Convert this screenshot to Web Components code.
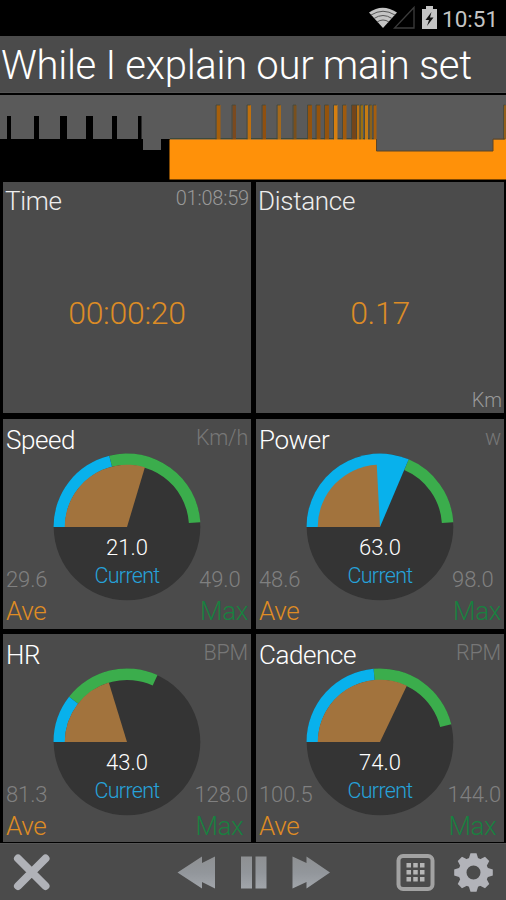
<!DOCTYPE html>
<html lang="en">
<head>
<meta charset="utf-8">
<title>Workout</title>
<style>
  body {
    margin: 0;
    background: #000;
    font-family: Roboto, "Liberation Sans", sans-serif;
    font-weight: 300;
  }
</style>
</head>
<body>
<workout-app></workout-app>
<script>
const define = (name, html, setup) => {
  const template = document.createElement('template');
  template.innerHTML = html;
  customElements.define(name, class extends HTMLElement {
    constructor() {
      super();
      this.attachShadow({ mode: 'open' }).appendChild(template.content.cloneNode(true));
    }
    connectedCallback() {
      if (setup) setup(this, this.shadowRoot);
    }
  });
};

define('status-bar', /*html*/`
  <style>
    :host {
      display: flex;
      justify-content: flex-end;
      height: 36px;
      background: #000;
      color: #c4c4c4;
      font-size: 22.5px;
      font-weight: 400;
      line-height: 38px;
    }
    svg { display: block; width: 75px; height: 36px; }
    span { width: 64px; white-space: nowrap; }
  </style>
  <svg viewBox="364 0 75 36">
    <path d="M366 12.500Q379.500 3 394 12.500L380 28z" fill="#c4c4c4"/>
    <path d="M368 15Q380 7.500 392 15M371 18.500Q380 12.500 389 18.500M374 22Q380 18 386 22" fill="none" stroke="#555" stroke-width="1"/>
    <path d="M411 7.500V28H391.500z" fill="none" stroke="#3c3c3c" stroke-width="1.300"/>
    <path d="M423 6h7v3h4v20h-15V9h4z" fill="#c4c4c4"/>
    <path d="M428.500 12l-6 8h3.500l-2 6 6.500-8.500h-3.500z" fill="#111"/>
  </svg>
  <span><slot></slot></span>
`);

define('interval-title', /*html*/`
  <style>
    :host {
      display: block;
      height: 57px;
      padding-left: 1px;
      box-sizing: border-box;
      background: #4b4b4b;
      border-bottom: 1px solid #555;
      color: #fff;
      font-size: 40px;
      letter-spacing: -.3px;
      line-height: 60px;
      white-space: nowrap;
    }
  </style>
  <slot></slot>
`);

// Power over time: black is done, orange is still to come
define('workout-profile', /*html*/`
  <style>
    :host { display: block; height: 87px; margin-top: 2px; }
    svg { display: block; }
  </style>
  <svg width="506" height="87" viewBox="0 95 506 87">
    <path d="M0 95h506v87H0z" fill="#5a5a5a"/>
    <path d="M0 139h143v11h18v-11h9v43H0z"/>
    <path d="M7 116h4v24H7zM34 116h5v24h-5zM60 116h7v24h-7zM86 116h7v24h-7zM112 116h5v24h-5zM138 116h3.500v24H138z"/>
    <path d="M170 138.500h206" stroke="#3d4a3c"/>
    <g id="peaks"></g>
    <path d="M169.500 139.500H376v11.500h117v-11.500h13V180H169.500z" fill="#ff9109"/>
    <path d="M376.500 139v12H493v-12h12V105" fill="none" stroke="#5d4526"/>
    <path d="M0 179.500h506V182H0z"/>
  </svg>
`, (el, root) => {
  const peaks = [
    [216.5, 4, '#a65f0b'], [232.500, 3.500, '#7a4a20'], [247.500, 3.500, '#c0700d'], [262.500, 3.500, '#8f5010'],
    [277.500, 3.500, '#a4691b'], [293.500, 3, '#79501d'], [308, 4, '#94530c'], [316.500, 4, '#94530c'],
    [325, 4, '#94530c'], [334, 3.500, '#d67f10'], [343, 3.500, '#a05a0d'], [352, 5, '#74451a'],
    [357, 2.500, '#bd7413'], [360.500, 2.500, '#9a7010'], [365, 3, '#c57b13'], [369.500, 2.500, '#8b6119'],
    [373.500, 3, '#a65e0e'], [504, 2, '#c57b13']
  ];
  root.getElementById('peaks').innerHTML = peaks.map(([x, w, fill]) =>
    `<path d="M${x} 105h${w}v35h-${w}z" fill="${fill}"/><path d="M${x - .5} 140V105h${w}" fill="none" stroke="#454838" stroke-width=".8"/>`
  ).join('');
});

define('value-tile', /*html*/`
  <style>
    :host {
      display: grid;
      grid-template-rows: 36px 1fr 30px;
      box-sizing: border-box;
      margin-bottom: 1px;
      padding: 1px 2px 0 2px;
      background: #4b4b4b;
      color: #999;
      font-size: 20px;
    }
    header { display: flex; justify-content: space-between; color: #999; }
    h2 {
      margin: 0;
      color: #eee;
      font-size: 26px;
      font-weight: 300;
      letter-spacing: -.3px;
      line-height: 37px;
    }
    header slot { display: block; letter-spacing: -.2px; line-height: 30px; }
    .value {
      align-self: center;
      padding-top: 24px;
      text-align: center;
      color: #dc8c26;
      font-size: 32px;
      letter-spacing: -.3px;
      line-height: 40px;
    }
    footer { text-align: right; line-height: 34px; }
  </style>
  <header><h2></h2><slot name="total"></slot></header>
  <div class="value"><slot></slot></div>
  <footer><slot name="unit"></slot></footer>
`, (el, root) => {
  root.querySelector('h2').textContent = el.getAttribute('label');
});

define('gauge-tile', /*html*/`
  <style>
    :host {
      display: grid;
      grid-template: 1fr / 1fr;
      background: #4b4b4b;
      overflow: hidden;
    }
    svg { grid-area: 1 / 1; display: block; width: 248px; height: 210px; }
    .labels {
      grid-area: 1 / 1;
      display: flex;
      flex-direction: column;
      justify-content: space-between;
      z-index: 1;
      height: 209px;
      padding: 0 3px 0 3px;
      box-sizing: border-box;
    }
    .row { display: flex; justify-content: space-between; }
    h2 {
      margin: 0;
      color: #fff;
      font-size: 26px;
      font-weight: 300;
      letter-spacing: -.4px;
      line-height: 42px;
    }
    .unit { color: #777; font-size: 21.5px; letter-spacing: -.2px; line-height: 38px; }
    .stats { color: #808080; font-size: 22px; letter-spacing: -.1px; line-height: 30px; }
    .names { font-size: 26px; letter-spacing: -.4px; line-height: 33px; }
    .ave { color: #df8c24; }
    .max { padding-left: 1px; color: #198040; }
    .wide .max { margin-right: -1px; }
    text { text-anchor: middle; font-size: 22px; }
    .current { font-size: 21.5px; letter-spacing: -.7px; }
  </style>
  <svg viewBox="-124 -108 248 210"></svg>
  <div class="labels">
    <div class="row"><h2></h2><span class="unit"></span></div>
    <div class="row">
      <div><div class="stats a"></div><div class="names ave">Ave</div></div>
      <div><div class="stats m"></div><div class="names max">Max</div></div>
    </div>
  </div>
`, (el, root) => {
  const get = name => el.getAttribute(name);
  // degrees run clockwise from nine o'clock
  const point = (deg, r) => {
    const a = deg * Math.PI / 180;
    return `${(-r * Math.cos(a)).toFixed(2)} ${(-r * Math.sin(a)).toFixed(2)}`;
  };
  const wedge = (deg, r, fill) => `<path d="M0 0H${-r}A${r} ${r} 0 0 1 ${point(deg, r)}z" fill="${fill}"/>`;
  const ring = (from, to, fill) =>
    `<path d="M${point(from, 73.5)}A73.500 73.500 0 0 1 ${point(to, 73.5)}L${point(to, 62)}A62 62 0 0 0 ${point(from, 62)}z" fill="${fill}"/>`;
  const [current, ave, max] = get('angles').split(' ').map(Number);

  root.querySelector('svg').innerHTML = `
    <circle r="73.300" fill="#343434"/>
    ${ring(current, max, '#3bad4c')}
    ${current > ave ? wedge(current, 73.5, '#08b1ec') : ring(0, current, '#08b1ec')}
    ${wedge(ave, 62.3, '#a2733d')}
    <text y="28" fill="#fff">${get('current')}</text>
    <text class="current" y="56" fill="#26a2da">Current</text>`;
  root.querySelector('h2').textContent = get('label');
  root.querySelector('.unit').textContent = get('unit');
  root.querySelector('.a').textContent = get('ave');
  root.querySelector('.m').textContent = get('max');
});

define('player-bar', /*html*/`
  <style>
    :host { display: block; height: 57px; background: #4b4b4b; border-top: 1px solid #555; box-sizing: border-box; }
    svg { display: block; }
  </style>
  <svg width="506" height="56" viewBox="0 844 506 56">
    <defs>
      <linearGradient id="metal" gradientUnits="userSpaceOnUse" x1="0" y1="856" x2="0" y2="889">
        <stop stop-color="#8e9092"/>
        <stop offset=".5" stop-color="#92969b"/>
        <stop offset="1" stop-color="#a2a6ab"/>
      </linearGradient>
    </defs>
    <path d="M18 858.500L45.500 886M45.500 858.500L18 886" stroke="#b0b2b8" stroke-width="8" stroke-linecap="round"/>
    <g fill="url(#metal)">
      <path d="M177.500 872.500L202 856.500V863L215 856.500V888.500L202 882V888.500z"/>
      <path d="M241 856.500h11v32h-11zM255.500 856.500h11v32h-11z"/>
      <path d="M330 872.500L306.500 856.500V863L292.500 856.500V888.500L306.500 882V888.500z"/>
    </g>
    <rect x="398.500" y="856" width="34" height="33" rx="4.500" fill="none" stroke="#a2a2a2" stroke-width="4"/>
    <g id="dots" fill="#b5b5b5"></g>
    <g id="gear" transform="translate(473.500 872.500)" fill="#b2b3b9"></g>
  </svg>
`, (el, root) => {
  let dots = '';
  for (let y = 863; y < 882; y += 7) {
    for (let x = 406.5; x < 424; x += 6.75) dots += `<rect x="${x}" y="${y}" width="4.500" height="4.500"/>`;
  }
  root.getElementById('dots').innerHTML = dots;
  let teeth = '';
  for (let i = 0; i < 8; i++) teeth += `<path d="M-5-13L-3-19.300H3L5-13z" transform="rotate(${i * 45})"/>`;
  root.getElementById('gear').innerHTML = teeth + '<circle r="11" fill="none" stroke="#b2b3b9" stroke-width="8"/>';
});

define('workout-app', /*html*/`
  <style>
    :host { display: block; width: 506px; height: 900px; overflow: hidden; background: #000; }
    .tiles {
      display: grid;
      grid-template: 232px 210px 208px / 248px 248px;
      gap: 5px;
      padding: 0 2px 1px 3px;
    }
  </style>
  <status-bar>10:51</status-bar>
  <interval-title>While I explain our main set</interval-title>
  <workout-profile></workout-profile>
  <div class="tiles">
    <value-tile label="Time"><span slot="total">01:08:59</span>00:00:20</value-tile>
    <value-tile label="Distance">0.17<span slot="unit">Km</span></value-tile>
    <gauge-tile label="Speed" unit="Km/h" current="21.0" ave="29.6" max="49.0" angles="76 106.700 176.300"></gauge-tile>
    <gauge-tile label="Power" unit="w" current="63.0" ave="48.6" max="98.0" angles="113 87 176.300"></gauge-tile>
    <gauge-tile label="HR" unit="BPM" current="43.0" ave="81.3" max="128.0" angles="38 73 114.500"></gauge-tile>
    <gauge-tile label="Cadence" unit="RPM" current="74.0" ave="100.5" max="144.0" angles="85 115.500 166"></gauge-tile>
  </div>
  <player-bar></player-bar>
`);
</script>
</body>
</html>
